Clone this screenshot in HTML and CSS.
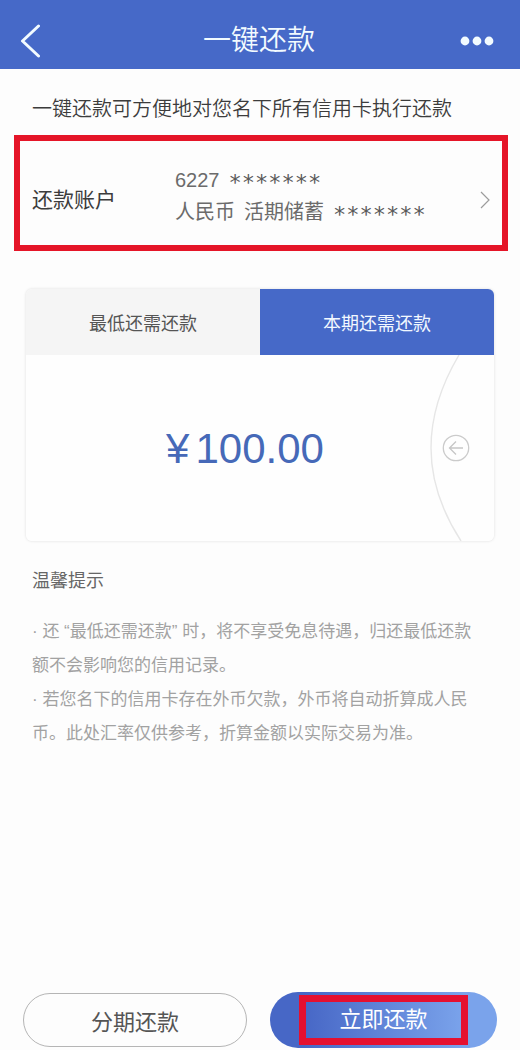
FILE: index.html
```html
<!DOCTYPE html>
<html lang="zh-CN">
<head>
<meta charset="utf-8">
<meta name="viewport" content="width=device-width, initial-scale=1">
<title>一键还款</title>
<link rel="stylesheet" href="styles.css">
</head>
<body>
<div class="page">
  <header class="topbar">
    <button class="icon-button" type="button" aria-label="返回">
      <svg width="20" height="34" viewBox="0 0 20 34" fill="none" stroke="currentColor" stroke-width="3" stroke-linecap="round" stroke-linejoin="round"><path d="M18.500 2 2.500 17l16 15"/></svg>
    </button>
    <h1 class="title">一键还款</h1>
    <button class="icon-button" type="button" aria-label="更多">
      <svg width="34" height="10" viewBox="0 0 34 10" fill="currentColor"><circle cx="5" cy="5" r="4.400"/><circle cx="17" cy="5" r="4.400"/><circle cx="29" cy="5" r="4.400"/></svg>
    </button>
  </header>

  <main class="content">
    <p class="intro">一键还款可方便地对您名下所有信用卡执行还款</p>

    <button class="account" type="button">
      <span class="account-label">还款账户</span>
      <span class="account-info">
        <span class="account-line"><span>6227</span><span class="mask">*******</span></span>
        <span class="account-line"><span>人民币</span><span>活期储蓄</span><span class="mask">*******</span></span>
      </span>
      <svg class="chevron" width="10" height="18" viewBox="0 0 10 18" fill="none" stroke="currentColor" stroke-width="1.2"><path d="m1 1 8 8-8 8"/></svg>
    </button>

    <section class="card">
      <div class="tabs" role="tablist">
        <button class="tab" type="button" role="tab" aria-selected="false">最低还需还款</button>
        <button class="tab tab-active" type="button" role="tab" aria-selected="true">本期还需还款</button>
      </div>
      <div class="panel" role="tabpanel">
        <p class="amount"><span>¥</span><span>100.00</span></p>
        <button class="switch" type="button" aria-label="切换">
          <svg width="64" height="186" viewBox="0 0 64 186" fill="none">
            <path d="M29 0C10 32 1 62 1 93s10 62 30 93" stroke="#e6e6e6" stroke-width="1.4"/>
            <circle cx="26" cy="93" r="12.7" stroke="#cbcbcb" stroke-width="1.3"/>
            <path d="M33 93H19.500M26 86.500 19.500 93l6.500 6.500" stroke="#c6c6c6" stroke-width="1.3"/>
          </svg>
        </button>
      </div>
    </section>

    <section class="tips">
      <h2 class="tips-title">温馨提示</h2>
      <p class="tip">· 还 “最低还需还款” 时，将不享受免息待遇，归还最低还款额不会影响您的信用记录。</p>
      <p class="tip">· 若您名下的信用卡存在外币欠款，外币将自动折算成人民币。此处汇率仅供参考，折算金额以实际交易为准。</p>
    </section>
  </main>

  <footer class="actions">
    <button class="action action-plain" type="button">分期还款</button>
    <button class="action action-primary" type="button"><span class="highlight">立即还款</span></button>
  </footer>
</div>
</body>
</html>
```

FILE: styles.css
```css
* {
  box-sizing: border-box;
}

body {
  margin: 0;
  background: #fdfdfd;
  color: #3c3c3c;
  font-family: "Liberation Sans", "Noto Sans CJK SC", sans-serif;
}

button {
  margin: 0;
  padding: 0;
  border: 0;
  background: none;
  color: inherit;
  font: inherit;
  cursor: pointer;
}

h1,
h2,
p {
  margin: 0;
  font-weight: 400;
}

svg {
  display: block;
}

.page {
  display: flex;
  flex-direction: column;
  min-height: 100vh;
}

.topbar {
  display: flex;
  align-items: center;
  justify-content: space-between;
  height: 69px;
  padding: 12px 22px 0 20px;
  background: #4669c8;
  color: #f2fbff;
}

.icon-button {
  display: flex;
  align-items: center;
  width: 38px;
  height: 40px;
}

.title {
  font-size: 28px;
  line-height: 40px;
  font-weight: 350;
}

.content {
  flex: 1;
}

.intro {
  padding: 25px 32px 11px;
  font-size: 20px;
  line-height: 30px;
  font-weight: 350;
}

.account {
  display: flex;
  align-items: center;
  width: calc(100% - 26px);
  min-height: 116px;
  margin: 0 12px 0 14px;
  padding: 4px 12px 0;
  border: 6px solid #e51528;
  text-align: left;
}

.account-label {
  flex: 0 0 143px;
  padding-top: 10px;
  font-size: 21px;
  line-height: 32px;
}

.account-info {
  flex: 1;
  padding-top: 2px;
  color: #6b6b6b;
  font-size: 20px;
  line-height: 32px;
}

.account-line {
  display: flex;
  gap: 9px;
  height: 32px;
}

.mask {
  padding-top: 3px;
  color: #5a5a5a;
  font-family: "DejaVu Sans Mono", monospace;
  font-size: 22px;
}

.chevron {
  margin-top: 10px;
  color: #9c9c9c;
}

.card {
  margin: 38px 26px 0;
  overflow: hidden;
  border-radius: 6px;
  box-shadow: 0 0 3px #dcdcdc;
}

.tabs {
  display: grid;
  grid-template-columns: 1fr 1fr;
}

.tab {
  height: 66px;
  background: #f5f5f5;
  color: #555;
  font-size: 18px;
}

.tab-active {
  background: #4669c8;
  color: #f2f8ff;
}

.panel {
  display: flex;
  align-items: center;
  background: #fefefe;
}

.amount {
  display: flex;
  flex: 1;
  justify-content: center;
  gap: 6px;
  padding: 2px 0 0 34px;
  color: #4669b8;
  font-size: 42px;
  line-height: 48px;
}

.tips {
  padding: 25px 32px;
}

.tips-title {
  margin-bottom: 19px;
  color: #666;
  font-size: 18px;
  line-height: 30px;
}

.tip {
  color: #a2a2a2;
  font-size: 17px;
  line-height: 34px;
}

.actions {
  display: grid;
  grid-template-columns: 74fr 75fr;
  align-items: center;
  gap: 23px;
  padding: 0 23px 2px;
}

.action {
  display: flex;
  align-items: center;
  justify-content: center;
  height: 54px;
  border-radius: 28px;
  font-size: 22px;
}

.action-plain {
  border: 1px solid #b5b5b5;
  color: #555;
}

.action-primary {
  height: 56px;
  background: linear-gradient(90deg, #4767c6 15%, #7aa3eb 85%);
  color: #fff;
}

.highlight {
  width: 169px;
  border: 7px solid #e51030;
  line-height: 36px;
}
```
